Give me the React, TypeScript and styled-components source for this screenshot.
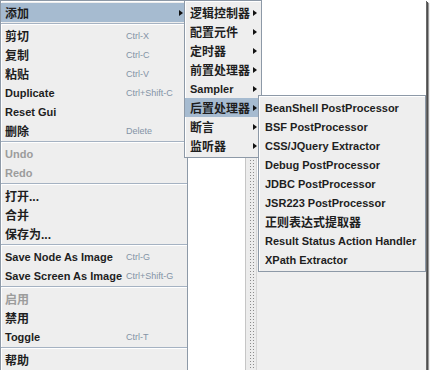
import React from 'react';
import styled, { createGlobalStyle } from 'styled-components';

const GlobalStyle = createGlobalStyle`
  html, body {
    margin: 0;
    padding: 0;
    background: #fff;
  }
  body {
    font-family: "Liberation Sans", "Noto Sans CJK SC", sans-serif;
  }
  * {
    box-sizing: border-box;
  }
`;

type Entry =
  | 'sep'
  | {
      label: string;
      shortcut?: string;
      submenu?: boolean;
      disabled?: boolean;
      active?: boolean;
      cjk?: boolean;
    };

const mainMenu: Entry[] = [
  { label: '添加', submenu: true, active: true, cjk: true },
  'sep',
  { label: '剪切', shortcut: 'Ctrl-X', cjk: true },
  { label: '复制', shortcut: 'Ctrl-C', cjk: true },
  { label: '粘贴', shortcut: 'Ctrl-V', cjk: true },
  { label: 'Duplicate', shortcut: 'Ctrl+Shift-C' },
  { label: 'Reset Gui' },
  { label: '删除', shortcut: 'Delete', cjk: true },
  'sep',
  { label: 'Undo', disabled: true },
  { label: 'Redo', disabled: true },
  'sep',
  { label: '打开...', cjk: true },
  { label: '合并', cjk: true },
  { label: '保存为...', cjk: true },
  'sep',
  { label: 'Save Node As Image', shortcut: 'Ctrl-G' },
  { label: 'Save Screen As Image', shortcut: 'Ctrl+Shift-G' },
  'sep',
  { label: '启用', disabled: true, cjk: true },
  { label: '禁用', cjk: true },
  { label: 'Toggle', shortcut: 'Ctrl-T' },
  'sep',
  { label: '帮助', cjk: true },
];

const addMenu: Entry[] = [
  { label: '逻辑控制器', submenu: true, cjk: true },
  { label: '配置元件', submenu: true, cjk: true },
  { label: '定时器', submenu: true, cjk: true },
  { label: '前置处理器', submenu: true, cjk: true },
  { label: 'Sampler', submenu: true },
  { label: '后置处理器', submenu: true, active: true, cjk: true },
  { label: '断言', submenu: true, cjk: true },
  { label: '监听器', submenu: true, cjk: true },
];

const postMenu: Entry[] = [
  { label: 'BeanShell PostProcessor' },
  { label: 'BSF PostProcessor' },
  { label: 'CSS/JQuery Extractor' },
  { label: 'Debug PostProcessor' },
  { label: 'JDBC PostProcessor' },
  { label: 'JSR223 PostProcessor' },
  { label: '正则表达式提取器', cjk: true },
  { label: 'Result Status Action Handler' },
  { label: 'XPath Extractor' },
];

const Frame = styled.div`
  position: relative;
  width: 426px;
  height: 370px;
  overflow: hidden;
  box-shadow: 1px 1px 0 #6a6a6a, 2px 2px 0 #4e4e4e, 3px 3px 1px #9a9a9a;
`;

const Workspace = styled.div`
  display: flex;
  height: 100%;
`;

const TreePane = styled.div`
  width: 245px;
  background: #fff;
`;

const Divider = styled.div`
  width: 12px;
  display: flex;
  justify-content: center;
  background: #ececec;
  border-left: 1px solid #c6c6c6;
  border-right: 1px solid #d6d6d6;
`;

const Bumps = styled.div`
  width: 5px;
  background-image: radial-gradient(circle, #8c8c8c 0.7px, transparent 1px);
  background-size: 3px 3px;
`;

const EditorPane = styled.div`
  flex: 1;
  display: flex;
  flex-direction: column;
`;

const EditorTop = styled.div`
  height: 180px;
  background: #fff;
`;

const EditorBottom = styled.div`
  flex: 1;
  background: #efefef;
`;

const Popup = styled.div<{ $left: number; $top: number; $width: number }>`
  position: absolute;
  left: ${(p) => p.$left}px;
  top: ${(p) => p.$top}px;
  width: ${(p) => p.$width}px;
  padding-top: 2px;
  padding-bottom: 2px;
  background: #eeeeee;
  border: 1px solid #8d99a7;
  box-shadow: inset 1px 1px 0 #fff;
`;

const Item = styled.div<{ $active?: boolean; $indent: number }>`
  display: flex;
  align-items: center;
  height: 19px;
  padding: 0 4px 0 ${(p) => p.$indent}px;
  background: ${(p) => (p.$active ? '#a6bbd0' : 'transparent')};
`;

const Label = styled.span<{ $cjk?: boolean; $disabled?: boolean; $min: number }>`
  min-width: ${(p) => p.$min}px;
  font-size: ${(p) => (p.$cjk ? 12 : 11)}px;
  font-weight: bold;
  white-space: nowrap;
  color: ${(p) => (p.$disabled ? '#9c9c9c' : '#1e1e1e')};
`;

const Shortcut = styled.span`
  font-size: 9px;
  color: #8393a6;
  white-space: nowrap;
`;

const Arrow = styled.span`
  margin-left: auto;
  width: 0;
  height: 0;
  border-top: 3.5px solid transparent;
  border-bottom: 3.5px solid transparent;
  border-left: 4px solid #111;
`;

const Separator = styled.div`
  height: 4px;
  display: flex;
  flex-direction: column;
  justify-content: center;
  &::before {
    content: '';
    height: 1px;
    background: #a5b2c2;
  }
  &::after {
    content: '';
    height: 1px;
    background: #fff;
  }
`;

function Menu(props: {
  entries: Entry[];
  left: number;
  top: number;
  width: number;
  indent: number;
  labelWidth?: number;
}) {
  const { entries, left, top, width, indent, labelWidth = 0 } = props;
  return (
    <Popup $left={left} $top={top} $width={width}>
      {entries.map((e, i) =>
        e === 'sep' ? (
          <Separator key={i} />
        ) : (
          <Item key={i} $active={e.active} $indent={indent}>
            <Label $cjk={e.cjk} $disabled={e.disabled} $min={e.shortcut ? labelWidth : 0}>
              {e.label}
            </Label>
            {e.shortcut && <Shortcut>{e.shortcut}</Shortcut>}
            {e.submenu && <Arrow />}
          </Item>
        )
      )}
    </Popup>
  );
}

export default function App() {
  return (
    <>
      <GlobalStyle />
      <Frame>
        <Workspace>
          <TreePane />
          <Divider>
            <Bumps />
          </Divider>
          <EditorPane>
            <EditorTop />
            <EditorBottom />
          </EditorPane>
        </Workspace>
        <Menu entries={mainMenu} left={0} top={0} width={188} indent={4} labelWidth={121} />
        <Menu entries={addMenu} left={184} top={0} width={78} indent={5} />
        <Menu entries={postMenu} left={258} top={95} width={168} indent={6} />
      </Frame>
    </>
  );
}
